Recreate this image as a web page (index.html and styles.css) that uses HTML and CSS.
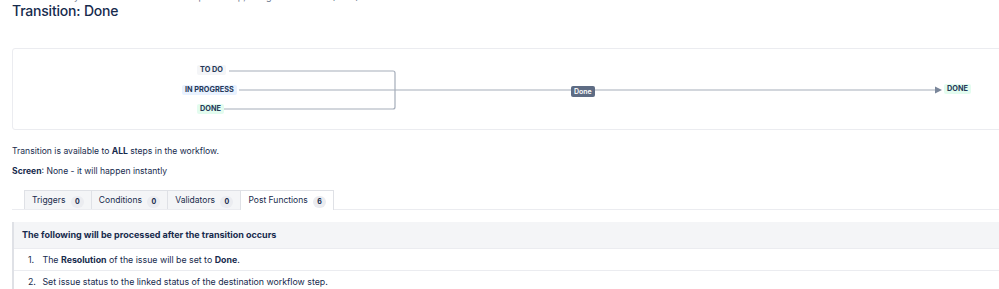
FILE: index.html
```html
<!DOCTYPE html>
<html>
<head>
    <title>Transition: Done</title>
    <link rel="stylesheet" href="styles.css">
</head>
<body>
    <div class="page">
        <p class="intro">Transitions let you move an issue from a step to a step, using the workflow (SSW).</p>
        <h2 class="title">Transition: Done</h2>

        <div class="diagram">
            <svg class="lines" width="1000" height="82" viewBox="0 0 1000 82">
                <path d="M216 22 H380 Q382 22 382 24 V58 Q382 60 380 60 H211" fill="none" stroke="#a5adba" stroke-width="1.2"/>
                <path d="M226 41 H924" fill="none" stroke="#a5adba" stroke-width="1.2"/>
                <path d="M922 37.5 L929 41 L922 44.5 Z" fill="#7a869a"/>
            </svg>
            <span class="lozenge grey" style="left:184px; top:16px;">TO DO</span>
            <span class="lozenge blue" style="left:169px; top:36px;">IN PROGRESS</span>
            <span class="lozenge green" style="left:184px; top:55px;">DONE</span>
            <span class="label" style="left:558px; top:37px;">Done</span>
            <span class="lozenge green" style="left:931px; top:35px;">DONE</span>
        </div>

        <p class="info first">Transition is available to <b>ALL</b> steps in the workflow.</p>
        <p class="info"><b>Screen</b>: None - it will happen instantly</p>

        <div class="tabs">
            <div class="tab">Triggers <span class="count">0</span></div>
            <div class="tab">Conditions <span class="count">0</span></div>
            <div class="tab">Validators <span class="count">0</span></div>
            <div class="tab active">Post Functions <span class="count">6</span></div>
        </div>

        <div class="functions">
            <div class="functions-head">The following will be processed after the transition occurs</div>
            <div class="functions-row"><span class="num">1.</span> The <b>Resolution</b> of the issue will be set to <b>Done</b>.</div>
            <div class="functions-row"><span class="num">2.</span> Set issue status to the linked status of the destination workflow step.</div>
        </div>
    </div>
</body>
</html>
```

FILE: styles.css
```css
body { margin: 0; font-family: Inter, "Noto Sans", sans-serif; color: #172b4d; overflow: hidden; background: #fff; }
.page { padding-left: 12px; width: 1000px; }
.intro { margin: -9px 0 0; font-size: 9px; line-height: 12px; color: #6b778c; white-space: nowrap; }
.title { margin: -2px 0 0; font-size: 14px; font-weight: 500; line-height: 20px; letter-spacing: -0.2px; }

.diagram { position: relative; margin-top: 27px; height: 80px; border: 1px solid #ebecf0; border-radius: 3px; }
.lines { position: absolute; left: 0; top: 0; }
.lozenge { position: absolute; height: 10px; line-height: 10px; padding: 0 3px; font-size: 7.3px; font-weight: 700; border-radius: 2px; color: #253858; }
.grey { background: #f4f5f7; }
.blue { background: #e9f2ff; }
.green { background: #e3fcef; }
.label { position: absolute; height: 11px; line-height: 11px; padding: 0 3px; font-size: 7px; font-weight: 600; color: #fff; background: #5e6c84; border-radius: 2px; }

.info { margin: 0; font-size: 8.6px; line-height: 12px; }
.info.first { margin-top: 15px; }
.info + .info { margin-top: 8px; }

.tabs { display: flex; margin-top: 13px; padding-left: 12px; border-bottom: 1px solid #ebecf0; }
.tab { height: 18px; line-height: 18px; padding: 0 7px; font-size: 8.5px; background: #f4f5f7; border: 1px solid #dfe1e6; border-bottom: none; border-right: none; margin-bottom: -1px; }
.tab:last-child { border-right: 1px solid #dfe1e6; }
.tab.active { background: #fff; height: 19px; }
.count { display: inline-block; min-width: 9px; height: 12px; line-height: 12px; padding: 0 2px; margin-left: 3px; text-align: center; font-size: 7px; font-weight: 700; background: #ebecf0; border-radius: 6px; vertical-align: -1px; }

.functions { margin-top: 12px; border-left: 2px solid #dfe1e6; }
.functions-head { height: 26px; line-height: 26px; padding-left: 8px; font-size: 9px; font-weight: 700; background: #f4f5f7; }
.functions-row { height: 21px; line-height: 21px; padding-left: 14px; font-size: 8.8px; border-top: 1px solid #ebecf0; }
.num { display: inline-block; width: 12px; }
```
